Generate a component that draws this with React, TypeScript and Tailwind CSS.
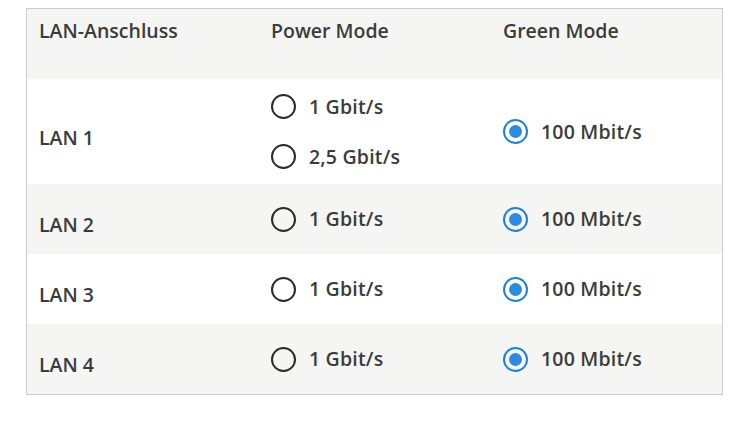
import React from 'react';

type Port = { name: string; power: string[]; green: string };

const ports: Port[] = [
  { name: 'LAN 1', power: ['1 Gbit/s', '2,5 Gbit/s'], green: '100 Mbit/s' },
  { name: 'LAN 2', power: ['1 Gbit/s'], green: '100 Mbit/s' },
  { name: 'LAN 3', power: ['1 Gbit/s'], green: '100 Mbit/s' },
  { name: 'LAN 4', power: ['1 Gbit/s'], green: '100 Mbit/s' },
];

function Radio({ label, checked }: { label: string; checked?: boolean }) {
  return (
    <label className="flex items-center gap-[13px]">
      {checked ? (
        <span className="flex h-[25px] w-[25px] items-center justify-center rounded-full border-[2.5px] border-[#1f7fd6]">
          <span className="h-[13px] w-[13px] rounded-full bg-[#2d8ae0]" />
        </span>
      ) : (
        <span className="h-[25px] w-[25px] rounded-full border-2 border-[#2a2a2a]" />
      )}
      <span className="tracking-[0.2px]">{label}</span>
    </label>
  );
}

export default function App() {
  return (
    <div className="h-[422px] w-[750px] bg-white pl-[26px] pt-[8px] font-['Open_Sans',sans-serif] text-[19.5px] font-semibold text-[#3b3b3b]">
      <div className="w-[697px] border border-[#c9cccf]">
        {/* Header */}
        <div className="grid h-[70px] grid-cols-[232px_232px_1fr] bg-[#f5f5f4] pl-3 pt-[7px]">
          <div>LAN-Anschluss</div>
          <div>Power Mode</div>
          <div>Green Mode</div>
        </div>

        {ports.map((p, i) => (
          <div
            key={p.name}
            className={`grid grid-cols-[232px_232px_1fr] items-center pl-3 ${i % 2 === 1 ? 'bg-[#f5f5f4]' : 'bg-white'} ${
              p.power.length > 1 ? 'h-[105px]' : 'h-[70px]'
            }`}
          >
            <div className="pt-[12px]">{p.name}</div>
            <div className="flex flex-col gap-[21px]">
              {p.power.map((v) => (
                <Radio key={v} label={v} />
              ))}
            </div>
            <div>
              <Radio label={p.green} checked />
            </div>
          </div>
        ))}
      </div>
    </div>
  );
}
